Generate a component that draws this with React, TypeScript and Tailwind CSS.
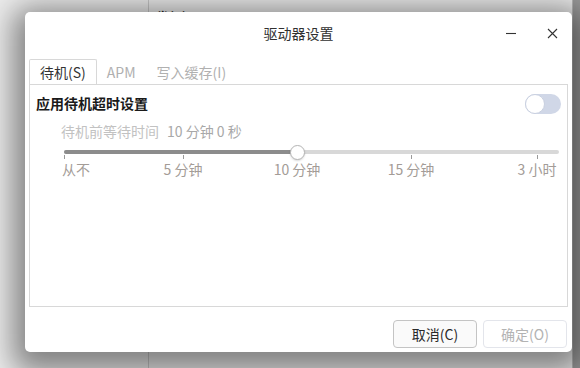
import React, { useState } from 'react';

const font = { fontFamily: '"Noto Sans CJK SC", "Noto Sans", sans-serif' };

const ticks = [
  { x: 0, label: '从不', align: 'left' },
  { x: 119, label: '5 分钟', align: 'center' },
  { x: 233, label: '10 分钟', align: 'center' },
  { x: 347, label: '15 分钟', align: 'center' },
  { x: 473, label: '3 小时', align: 'center' },
];

const App: React.FC = () => {
  const [tab] = useState('standby');
  const [enabled, setEnabled] = useState(false);
  const thumb = 233;

  return (
    <div className="relative w-[580px] h-[368px] overflow-hidden bg-[#ececec]" style={font}>
      {/* window behind the dialog */}
      <div className="flex h-full">
        <div className="w-[149px] h-full border-r border-[#c8c8c8]" />
        <div className="flex-1 pl-[7px] pt-[3px]">
          <span className="text-[13px] font-bold text-[#222]">卷(V)</span>
        </div>
        <div className="w-[8px] h-full bg-[#9a9a9a] border-l border-[#b8b8b8]" />
      </div>

      {/* dialog */}
      <div className="absolute left-[25px] top-[12px] w-[547px] h-[340px] bg-white rounded-[5px] flex flex-col shadow-[0_8px_30px_12px_rgba(0,0,0,0.45)]">
        {/* title bar */}
        <div className="relative h-[42px] flex items-center justify-center">
          <span className="text-[14px] text-[#303030] mt-[1px]">驱动器设置</span>
          <div className="absolute right-[14px] top-[15px] flex items-center gap-[30px]">
            <svg width="12" height="12" viewBox="0 0 12 12">
              <path d="M1 6.5h10" stroke="#333" strokeWidth="1.1" />
            </svg>
            <svg width="11" height="11" viewBox="0 0 11 11">
              <path d="M1 1l9 9M10 1l-9 9" stroke="#333" strokeWidth="1.1" />
            </svg>
          </div>
        </div>

        {/* tabs */}
        <div className="mt-[5px] px-[4px] flex flex-col">
          <div className="flex h-[26px] text-[14px]">
            <div
              className={`px-[10px] flex items-center border border-b-0 rounded-t-[2px] ${
                tab === 'standby' ? 'border-[#d8d8d8] text-[#333] bg-white' : 'border-transparent'
              }`}
            >
              待机(S)
            </div>
            <div className="px-[10px] flex items-center text-[#b0b0b0]">APM</div>
            <div className="px-[11px] flex items-center text-[#b0b0b0]">写入缓存(I)</div>
          </div>

          <div className="h-[223px] border border-[#d8d8d8] -mt-px">
            <div className="flex items-center justify-between pl-[6px] pr-[6px] pt-[8px]">
              <span className="text-[14px] font-bold text-[#1a1a1a]">应用待机超时设置</span>
              <button
                onClick={() => setEnabled(!enabled)}
                className="w-[36px] h-[20px] rounded-full bg-[#d0d7e7] flex items-center"
              >
                <span className="w-[20px] h-[20px] rounded-full bg-white border border-[#c9d0e0]" />
              </button>
            </div>

            <div className="pl-[31px] mt-[7px] text-[14px] flex gap-[8px]">
              <span className="text-[#c2c2c2]">待机前等待时间</span>
              <span className="text-[#a8a8a8]">10 分钟 0 秒</span>
            </div>

            {/* slider */}
            <div className="relative ml-[34px] w-[495px] h-[40px] mt-[3px]">
              <div className="absolute left-0 right-0 top-[5px] h-[4px] rounded-full bg-[#d8d8d8]" />
              <div
                className="absolute left-0 top-[5px] h-[4px] rounded-full bg-[#8c8c8c]"
                style={{ width: thumb }}
              />
              {ticks.map((t) => (
                <div key={t.label}>
                  <div className="absolute top-[10px] w-px h-[4px] bg-[#9a9a9a]" style={{ left: t.x }} />
                  <span
                    className="absolute top-[14px] text-[14px] text-[#a39c97] whitespace-nowrap"
                    style={{
                      left: t.x,
                      transform: t.align === 'left' ? 'translateX(-2px)' : 'translateX(-50%)',
                    }}
                  >
                    {t.label}
                  </span>
                </div>
              ))}
              <div
                className="absolute top-0 w-[15px] h-[15px] -ml-[7px] rounded-full bg-white border border-[#b5b5b5] shadow-[0_1px_2px_rgba(0,0,0,0.15)]"
                style={{ left: thumb }}
              />
            </div>
          </div>
        </div>

        {/* buttons */}
        <div className="flex justify-end gap-[6px] pr-[5px] mt-[13px]">
          <button className="w-[84px] h-[28px] rounded-[4px] border border-[#c4c4c4] bg-[#fafafa] text-[14px] text-[#2a2a2a]">
            取消(C)
          </button>
          <button className="w-[84px] h-[28px] rounded-[4px] border border-[#e3e5eb] bg-white text-[14px] text-[#b3b3b3]">
            确定(O)
          </button>
        </div>
      </div>
    </div>
  );
};

export default App;
